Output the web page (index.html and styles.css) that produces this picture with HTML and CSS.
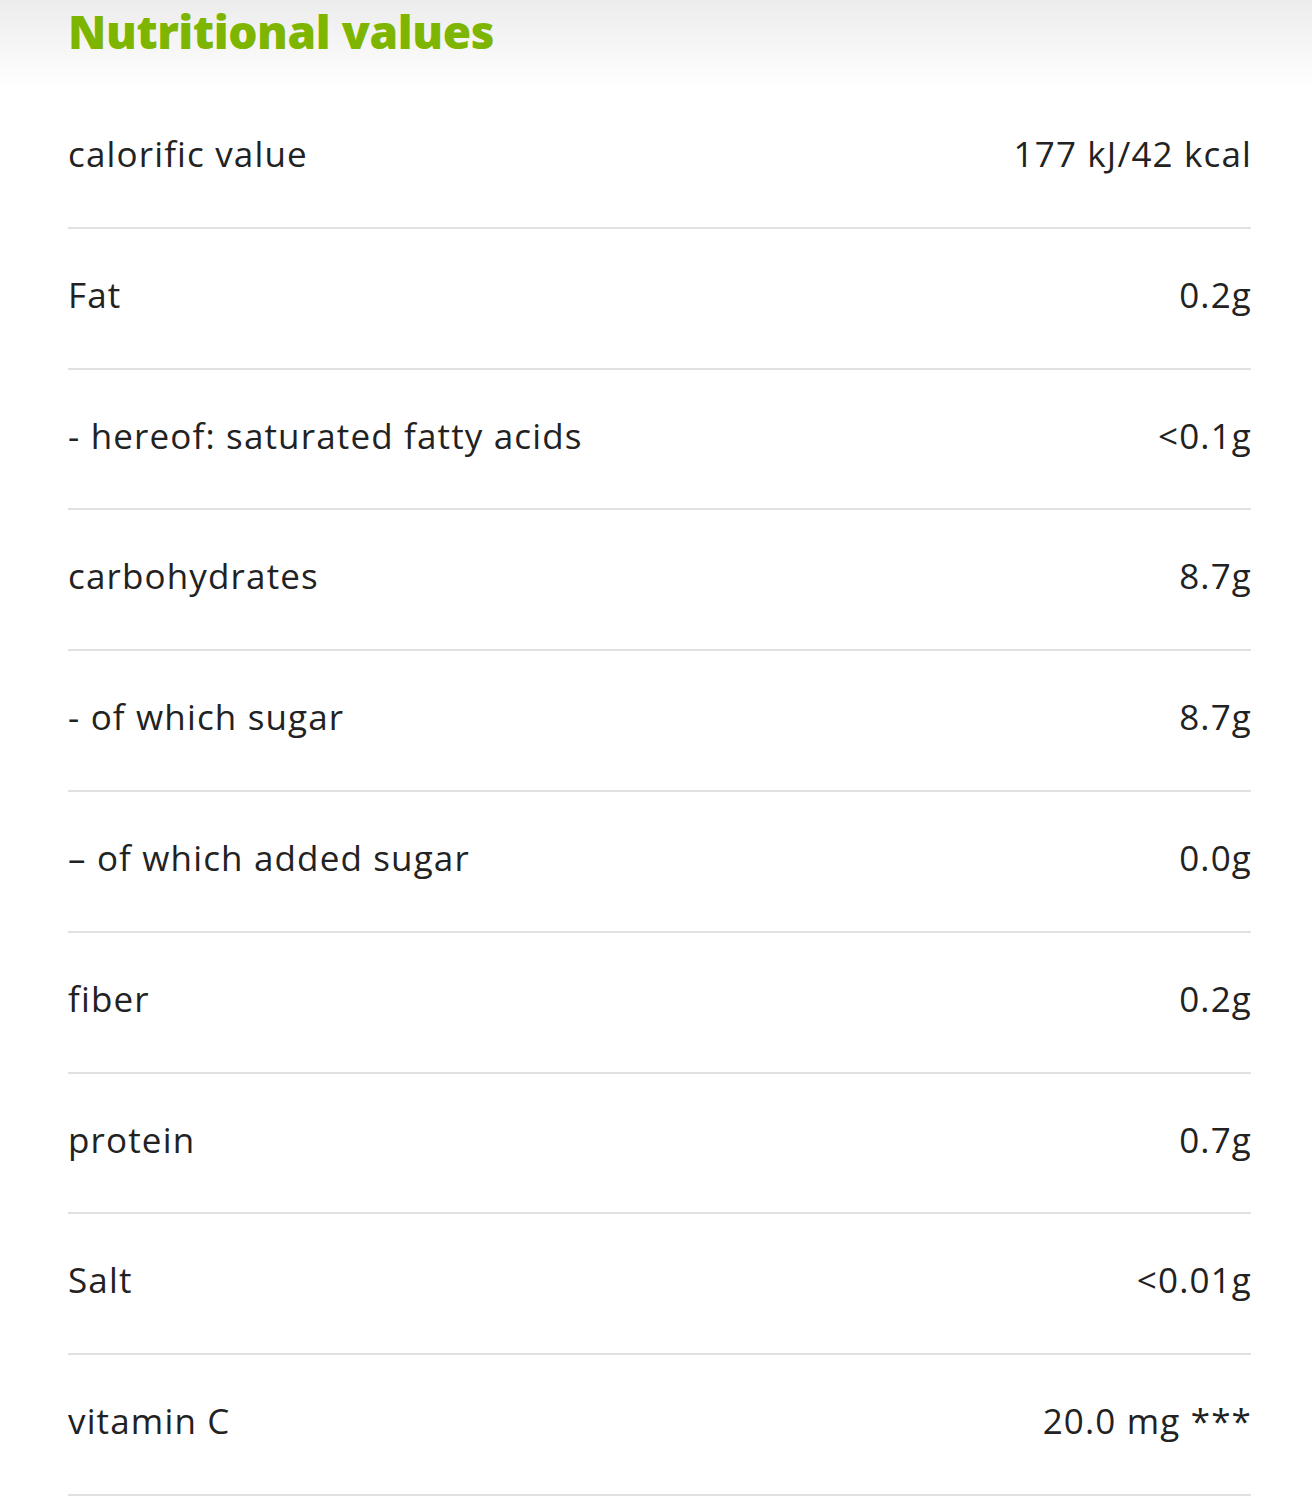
FILE: index.html
```html
<!DOCTYPE html>
<html lang="en">
<head>
  <meta charset="UTF-8">
  <title>Nutritional values</title>
  <link rel="stylesheet" href="styles.css">
</head>
<body>
  <div class="header">
    <h2 class="title">Nutritional values</h2>
  </div>

  <div class="table">
    <div class="row"><span>calorific value</span><span class="value">177 kJ/42 kcal</span></div>
    <div class="row"><span>Fat</span><span class="value">0.2g</span></div>
    <div class="row"><span>- hereof: saturated fatty acids</span><span class="value">&lt;0.1g</span></div>
    <div class="row"><span>carbohydrates</span><span class="value">8.7g</span></div>
    <div class="row"><span>- of which sugar</span><span class="value">8.7g</span></div>
    <div class="row"><span>– of which added sugar</span><span class="value">0.0g</span></div>
    <div class="row"><span>fiber</span><span class="value">0.2g</span></div>
    <div class="row"><span>protein</span><span class="value">0.7g</span></div>
    <div class="row"><span>Salt</span><span class="value">&lt;0.01g</span></div>
    <div class="row"><span>vitamin C</span><span class="value">20.0 mg ***</span></div>
  </div>
</body>
</html>
```

FILE: styles.css
```css
body {
  margin: 0;
  background-color: #fff;
  color: #222;
  font-family: "Open Sans", "Noto Sans", sans-serif;
}

.header {
  height: 88px;
  padding: 0 61px 0 68px;
  background: linear-gradient(to bottom, #ececec 0%, #fff 100%);
}

.title {
  margin: 0;
  padding-top: 2px;
  font-size: 46px;
  font-weight: 800;
  line-height: 58px;
  letter-spacing: -0.4px;
  color: #7db500;
}

.table {
  padding: 0 61px 0 68px;
}

.row {
  display: flex;
  justify-content: space-between;
  align-items: center;
  padding: 44px 0 51.8px;
  font-size: 35px;
  line-height: 43px;
  letter-spacing: 1.15px;
  border-bottom: 2px solid #e1e1e1;
}

.value {
  margin-right: -1px;
}
```
